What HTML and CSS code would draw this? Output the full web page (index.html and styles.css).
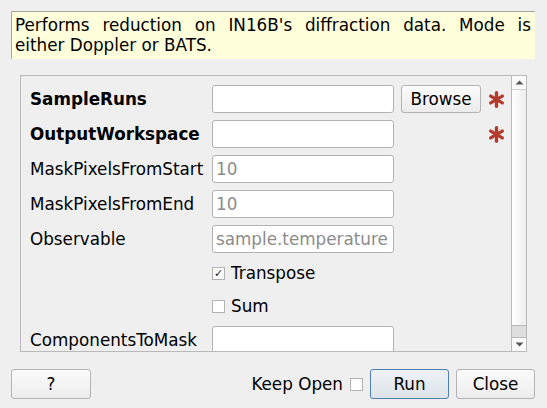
FILE: index.html
```html
<!DOCTYPE html>
<html>
<head>
<meta charset="utf-8">
<link rel="stylesheet" href="styles.css">
</head>
<body>
<div class="dialog">
  <div class="desc">Performs reduction on IN16B's diffraction data. Mode is either Doppler or BATS.</div>
  <div class="frame">
    <div class="content">
      <div class="form">
        <div class="label bold">SampleRuns</div>
        <input class="field" type="text">
        <button class="btn browse">Browse</button>
        <span class="req"><svg width="17" height="17" viewBox="0 0 17 17"><g stroke="#b23c2c" stroke-width="3.4" stroke-linecap="round"><line x1="8.5" y1="1.8" x2="8.5" y2="15.2"/><line x1="2.7" y1="5.15" x2="14.3" y2="11.85"/><line x1="2.7" y1="11.85" x2="14.3" y2="5.15"/></g></svg></span>

        <div class="label bold">OutputWorkspace</div>
        <input class="field" type="text">
        <span></span>
        <span class="req"><svg width="17" height="17" viewBox="0 0 17 17"><g stroke="#b23c2c" stroke-width="3.4" stroke-linecap="round"><line x1="8.5" y1="1.8" x2="8.5" y2="15.2"/><line x1="2.7" y1="5.15" x2="14.3" y2="11.85"/><line x1="2.7" y1="11.85" x2="14.3" y2="5.15"/></g></svg></span>

        <div class="label">MaskPixelsFromStart</div>
        <input class="field" type="text" placeholder="10">
        <span></span><span></span>

        <div class="label">MaskPixelsFromEnd</div>
        <input class="field" type="text" placeholder="10">
        <span></span><span></span>

        <div class="label">Observable</div>
        <input class="field" type="text" placeholder="sample.temperature">
        <span></span><span></span>

        <div class="label"></div>
        <label class="check"><span class="box checked">✓</span>Transpose</label>
        <span></span><span></span>

        <div class="label"></div>
        <label class="check"><span class="box"></span>Sum</label>
        <span></span><span></span>

        <div class="label">ComponentsToMask</div>
        <input class="field" type="text">
        <span></span><span></span>
      </div>
    </div>
    <div class="scrollbar">
      <div class="arrow up"><svg width="9" height="5" viewBox="0 0 9 5"><path d="M0.5 4.5 L4.5 0.5 L8.5 4.5 Z" fill="#555"/></svg></div>
      <div class="track"></div>
      <div class="handle"></div>
      <div class="arrow down"><svg width="9" height="5" viewBox="0 0 9 5"><path d="M0.5 0.5 L8.5 0.5 L4.5 4.5 Z" fill="#555"/></svg></div>
    </div>
  </div>
  <div class="footer">
    <button class="btn help">?</button>
    <div class="spacer"></div>
    <label class="keep">Keep Open <span class="box"></span></label>
    <button class="btn run">Run</button>
    <button class="btn close">Close</button>
  </div>
</div>
</body>
</html>
```

FILE: styles.css
```css
html, body {
  margin: 0;
  padding: 0;
  background: #efefef;
}
body {
  font-family: "DejaVu Sans", sans-serif;
  font-size: 16.8px;
  color: #000;
}
.dialog {
  width: 547px;
  height: 408px;
  box-sizing: border-box;
  padding: 11px 12px 9px 11px;
  display: flex;
  flex-direction: column;
}
.desc {
  background: #ffffdc;
  border-top: 1px solid #a6a6a6;
  border-left: 1px solid #a6a6a6;
  padding: 3px 4px 4px 3px;
  line-height: 20px;
  text-align: justify;
  height: 40px;
}
.frame {
  margin: 16px 8px 0 9px;
  height: 277px;
  box-sizing: border-box;
  border: 1px solid #b9b9b9;
  display: flex;
  overflow: hidden;
}
.content {
  flex: 1;
  overflow: hidden;
  padding: 9px 0 0 9px;
}
.form {
  display: grid;
  grid-template-columns: 175px 182px 80px 17px;
  column-gap: 7px;
  row-gap: 7px;
  align-items: center;
}
.label {
  white-space: nowrap;
  line-height: 28px;
}
.bold {
  font-weight: bold;
}
.field {
  height: 28px;
  box-sizing: border-box;
  border: 1px solid #b3b3b3;
  border-radius: 3px;
  background: #fff;
  font-family: "DejaVu Sans", sans-serif;
  font-size: 16.8px;
  padding: 0 3px;
  margin: 0;
  width: 182px;
  outline: none;
}
.field::placeholder {
  color: #8c8c8c;
}
.btn {
  font-family: "DejaVu Sans", sans-serif;
  font-size: 16.8px;
  color: #000;
  height: 28px;
  box-sizing: border-box;
  border: 1px solid #b3b3b3;
  border-radius: 3px;
  background: linear-gradient(#fbfbfb, #ececec);
  padding: 0;
  margin: 0;
}
.browse {
  width: 80px;
}
.req {
  display: flex;
  align-items: center;
  height: 28px;
}
.check {
  display: flex;
  align-items: center;
  gap: 6px;
  height: 26px;
}
.box {
  width: 13px;
  height: 13px;
  box-sizing: border-box;
  border: 1px solid #b3b3b3;
  background: #fff;
  display: inline-flex;
  align-items: center;
  justify-content: center;
  font-size: 11px;
  line-height: 1;
  font-weight: bold;
  color: #222;
}
.scrollbar {
  width: 14px;
  border-left: 1px solid #b9b9b9;
  display: flex;
  flex-direction: column;
}
.arrow {
  height: 13px;
  display: flex;
  align-items: center;
  justify-content: center;
  background: #fafafa;
}
.arrow.up {
  border-bottom: 1px solid #d0d0d0;
}
.arrow.down {
  border-top: 1px solid #b9b9b9;
}
.track {
  flex: 1;
  background: linear-gradient(to right, #ffffff, #eeeeee);
}
.handle {
  height: 11px;
  background: #dedede;
  border-top: 1px solid #b9b9b9;
}
.footer {
  margin-top: 17px;
  display: flex;
  align-items: center;
  height: 30px;
}
.footer .btn {
  height: 30px;
}
.help {
  width: 80px;
}
.spacer {
  flex: 1;
}
.keep {
  display: flex;
  align-items: center;
  gap: 7px;
  margin-right: 7px;
}
.run {
  width: 79px;
  border-color: #4f7fae;
  background: linear-gradient(#eef2f5, #dde4ea);
  margin-right: 7px;
}
.close {
  width: 79px;
}
```
